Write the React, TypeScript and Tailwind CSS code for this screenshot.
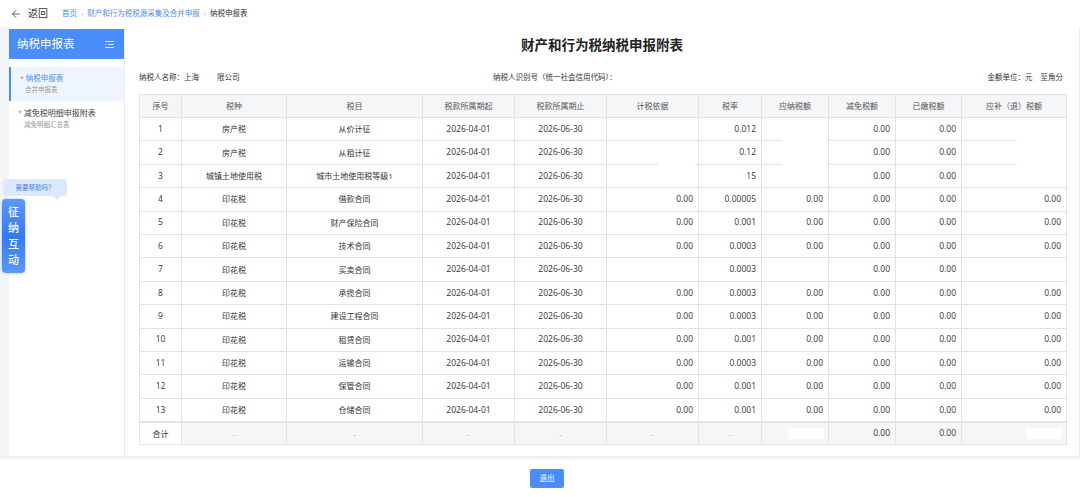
import { ArrowLeft } from 'lucide-react';

type Row = {
    no: string;
    kind: string;
    item: string;
    base: string;
    rate: string;
    due: string;
    relief: string;
    paid: string;
    refund: string;
};

const rows: Row[] = [
    { no: '1', kind: '房产税', item: '从价计征', base: '', rate: '0.012', due: '', relief: '0.00', paid: '0.00', refund: '' },
    { no: '2', kind: '房产税', item: '从租计征', base: '', rate: '0.12', due: '', relief: '0.00', paid: '0.00', refund: '' },
    { no: '3', kind: '城镇土地使用税', item: '城市土地使用税等级1', base: '', rate: '15', due: '', relief: '0.00', paid: '0.00', refund: '' },
    { no: '4', kind: '印花税', item: '借款合同', base: '0.00', rate: '0.00005', due: '0.00', relief: '0.00', paid: '0.00', refund: '0.00' },
    { no: '5', kind: '印花税', item: '财产保险合同', base: '0.00', rate: '0.001', due: '0.00', relief: '0.00', paid: '0.00', refund: '0.00' },
    { no: '6', kind: '印花税', item: '技术合同', base: '0.00', rate: '0.0003', due: '0.00', relief: '0.00', paid: '0.00', refund: '0.00' },
    { no: '7', kind: '印花税', item: '买卖合同', base: '', rate: '0.0003', due: '', relief: '0.00', paid: '0.00', refund: '' },
    { no: '8', kind: '印花税', item: '承揽合同', base: '0.00', rate: '0.0003', due: '0.00', relief: '0.00', paid: '0.00', refund: '0.00' },
    { no: '9', kind: '印花税', item: '建设工程合同', base: '0.00', rate: '0.0003', due: '0.00', relief: '0.00', paid: '0.00', refund: '0.00' },
    { no: '10', kind: '印花税', item: '租赁合同', base: '0.00', rate: '0.001', due: '0.00', relief: '0.00', paid: '0.00', refund: '0.00' },
    { no: '11', kind: '印花税', item: '运输合同', base: '0.00', rate: '0.0003', due: '0.00', relief: '0.00', paid: '0.00', refund: '0.00' },
    { no: '12', kind: '印花税', item: '保管合同', base: '0.00', rate: '0.001', due: '0.00', relief: '0.00', paid: '0.00', refund: '0.00' },
    { no: '13', kind: '印花税', item: '仓储合同', base: '0.00', rate: '0.001', due: '0.00', relief: '0.00', paid: '0.00', refund: '0.00' },
];

const headers = ['序号', '税种', '税目', '税款所属期起', '税款所属期止', '计税依据', '税率', '应纳税额', '减免税额', '已缴税额', '应补（退）税额'];
const widths = [42, 105, 136, 92, 92, 92, 63, 67, 67, 66, 105];

const cell = 'border-r border-b border-[#e3e3e3] text-[#333]';
const txt = `${cell} text-center text-[8px]`;
const digits = `${cell} text-center text-[8.5px]`;
const num = `${cell} relative text-right pr-[5px] text-[8.5px]`;
const sumCell = `${cell} border-t border-t-[#e3e3e3] bg-[#f5f6f8]`;

function Gap({ className }: { className: string }) {
    // white patch over the bottom border, as in the screenshot
    return <span className={`absolute bottom-[-1px] h-[1px] bg-white ${className}`} />;
}

function MenuIcon() {
    return (
        <svg width="9" height="7" viewBox="0 0 10 8" fill="none" stroke="white" strokeWidth="1" opacity="0.9">
            <path d="M0 0.5h10M3 4h7M0 7.5h10M0 4h1" />
        </svg>
    );
}

export default function App() {
    return (
        <div className="relative flex h-[497px] w-[1080px] flex-col overflow-hidden bg-white font-['Open_Sans','Noto_Sans_CJK_SC',sans-serif] text-[#333]">
            {/* top bar */}
            <div className="flex h-[27px] shrink-0 items-center">
                <div className="ml-[10px] flex items-center gap-[6px] text-[#333]">
                    <ArrowLeft className="h-[12px] w-[12px]" strokeWidth={1.5} />
                    <span className="text-[10px]">返回</span>
                </div>
                <div className="ml-[14px] flex items-center gap-[4px] text-[7.5px]">
                    <span className="text-[#4a8df8]">首页</span>
                    <span className="text-[#aaa]">›</span>
                    <span className="text-[#4a8df8]">财产和行为税税源采集及合并申报</span>
                    <span className="text-[#aaa]">›</span>
                    <span className="text-[#333]">纳税申报表</span>
                </div>
            </div>

            <div className="flex h-[429px] shrink-0">
                <div className="w-[9px] shrink-0 bg-[#f3f4f7]" />

                {/* sidebar */}
                <aside className="w-[115px] shrink-0 pt-[2px]">
                    <div className="flex h-[30px] items-center justify-between bg-[#4a8df8] pl-[8px] pr-[10px]">
                        <span className="text-[11.5px] text-white">纳税申报表</span>
                        <MenuIcon />
                    </div>
                    <div className="mt-[8px] flex h-[34px] flex-col justify-center border-l-2 border-[#4a8df8] bg-[#eef5ff] pl-[9px]">
                        <div className="flex items-start text-[7.5px] leading-[11px]">
                            <span className="mr-[2px] text-[7px] text-[#f56c6c]">*</span>
                            <span className="text-[#4a8df8]">纳税申报表</span>
                        </div>
                        <div className="pl-[5px] text-[6.5px] leading-[11px] text-[#999]">合并申报表</div>
                    </div>
                    <div className="flex h-[34px] flex-col justify-center pl-[9px]">
                        <div className="flex items-start text-[8px] leading-[12px]">
                            <span className="mr-[2px] text-[7px] text-[#f56c6c]">*</span>
                            <span className="text-[#444]">减免税明细申报附表</span>
                        </div>
                        <div className="pl-[6px] text-[6.5px] leading-[11px] text-[#999]">减免明细汇总表</div>
                    </div>
                </aside>

                {/* main */}
                <main className="w-[956px] shrink-0 border-r border-l border-[#ececec] px-[14px] pt-[9px]">
                    <h1 className="text-center text-[13.5px] font-bold leading-[18px] text-[#222]">
                        财产和行为税纳税申报附表
                    </h1>
                    <div className="mt-[18px] flex h-[12px] items-center text-[7.5px] text-[#333]">
                        <span className="w-[354px] shrink-0">
                            纳税人名称：上海<span className="ml-[18px]">限公司</span>
                        </span>
                        <span className="flex-1">纳税人识别号（统一社会信用代码）：</span>
                        <span className="pr-[2px]">
                            金额单位：元<span className="ml-[8px]">至角分</span>
                        </span>
                    </div>

                    <table className="mt-[10px] w-[927px] table-fixed border-separate border-spacing-0 border-l border-t border-[#e3e3e3]">
                        <colgroup>
                            {widths.map((w, i) => (
                                <col key={i} style={{ width: w }} />
                            ))}
                        </colgroup>
                        <thead>
                            <tr className="h-[23px]">
                                {headers.map((h) => (
                                    <th key={h} className="border-r border-b border-[#e3e3e3] bg-[#f5f6f8] text-center text-[8px] font-normal text-[#555]">
                                        {h}
                                    </th>
                                ))}
                            </tr>
                        </thead>
                        <tbody>
                            {rows.map((r, i) => (
                                <tr key={r.no} className="h-[23.4px]">
                                    <td className={digits}>{r.no}</td>
                                    <td className={txt}>{r.kind}</td>
                                    <td className={txt}>{r.item}</td>
                                    <td className={digits}>2026-04-01</td>
                                    <td className={digits}>2026-06-30</td>
                                    <td className={num}>
                                        {r.base}
                                        {i === 1 && <Gap className="left-[51px] right-[3px]" />}
                                    </td>
                                    <td className={num}>{r.rate}</td>
                                    <td className={num}>
                                        {r.due}
                                        {(i === 0 || i === 1) && <Gap className="left-[20px] right-0" />}
                                    </td>
                                    <td className={num}>{r.relief}</td>
                                    <td className={num}>{r.paid}</td>
                                    <td className={num}>
                                        {r.refund}
                                        {(i === 0 || i === 1) && <Gap className="left-[55px] right-0" />}
                                    </td>
                                </tr>
                            ))}
                            <tr className="h-[23.4px]">
                                <td className={`${txt} border-t border-t-[#e3e3e3] bg-white`}>合计</td>
                                {[0, 1, 2, 3, 4, 5].map((k) => (
                                    <td key={k} className={`${sumCell} text-center text-[8px] text-[#999]`}>
                                        -
                                    </td>
                                ))}
                                <td className={`${sumCell} pr-[4px]`}>
                                    <div className="ml-auto h-[11px] w-[36px] bg-white" />
                                </td>
                                <td className={`${sumCell} text-right pr-[5px] text-[8.5px]`}>0.00</td>
                                <td className={`${sumCell} text-right pr-[5px] text-[8.5px]`}>0.00</td>
                                <td className={`${sumCell} pr-[4px]`}>
                                    <div className="ml-auto h-[11px] w-[36px] bg-white" />
                                </td>
                            </tr>
                        </tbody>
                    </table>
                </main>
            </div>

            {/* footer */}
            <div className="h-[4px] shrink-0 bg-gradient-to-b from-[#eceef2] to-[#f6f7f9]" />
            <div className="flex h-[37px] shrink-0 items-center justify-center">
                <button className="ml-[14px] h-[19px] w-[34px] rounded-[2px] bg-[#4a8df8] text-[7.5px] text-white">
                    退出
                </button>
            </div>

            {/* help widget */}
            <div className="absolute left-[3px] top-[179px] flex h-[17px] w-[64px] items-center justify-center rounded-[3px] bg-[#dce8fd] text-[6.5px] text-[#4a7fe8]">
                需要帮助吗？
                <span className="absolute bottom-[-4px] right-[6px] h-0 w-0 border-x-[4px] border-t-[4px] border-x-transparent border-t-[#dce8fd]" />
            </div>
            <div className="absolute left-[2px] top-[199px] flex h-[74px] w-[23px] flex-col items-center justify-center gap-[2px] rounded-[4px] bg-gradient-to-b from-[#5b98fa] via-[#3479f0] to-[#5b98fa] text-[11px] font-medium leading-[14px] text-white shadow-[0_0_3px_#8fb6fb]">
                <span>征</span>
                <span>纳</span>
                <span>互</span>
                <span>动</span>
            </div>
        </div>
    );
}
